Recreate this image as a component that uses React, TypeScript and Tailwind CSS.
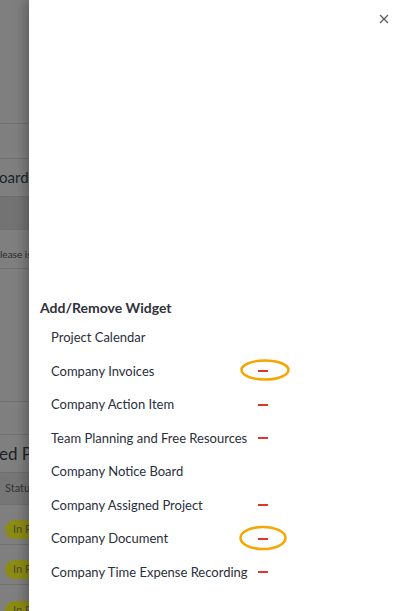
import React from "react";

const items: { label: string; dash: boolean; circle?: "a" | "b" }[] = [
  { label: "Project Calendar", dash: false },
  { label: "Company Invoices", dash: true, circle: "a" },
  { label: "Company Action Item", dash: true },
  { label: "Team Planning and Free Resources", dash: true },
  { label: "Company Notice Board", dash: false },
  { label: "Company Assigned Project", dash: true },
  { label: "Company Document", dash: true, circle: "b" },
  { label: "Company Time Expense Recording", dash: true },
];

function Badge() {
  return (
    <div className="ml-[5px] h-[19px] w-[40px] rounded-full bg-[#8c8c14] flex items-center pl-[8px] text-[11px] text-[#4a4a30] overflow-hidden">
      In P
    </div>
  );
}

export default function App() {
  return (
    <div
      className="relative w-[409px] h-[611px] overflow-hidden bg-[#7f7f7f]"
      style={{ fontFamily: "Lato, 'Noto Sans', sans-serif" }}
    >
      {/* dimmed page beneath */}
      <div className="flex flex-col w-[409px] text-[#1c1f2a] whitespace-nowrap">
        <div className="h-[124px] border-b border-[#6f6f6f]" />
        <div className="h-[35px] border-b border-[#6f6f6f]" />
        <div className="h-[38px] border-b border-[#6f6f6f] flex items-center text-[15px] -ml-[1px]">
          oard
        </div>
        <div className="h-[33px] border-b border-[#6f6f6f] bg-[#737373]" />
        <div className="h-[39px] border-b border-[#6f6f6f] flex items-center text-[10px] text-[#2a2a2a] pt-[10px]">
          lease is
        </div>
        <div className="h-[133px] border-b border-[#6f6f6f]" />
        <div className="h-[33px] border-b border-[#6f6f6f]" />
        <div className="h-[38px] border-b border-[#6f6f6f] flex items-center text-[17px] -ml-[1px]">
          ed Pr
        </div>
        <div className="h-[32px] border-b border-[#6f6f6f] bg-[#767676] flex items-center pl-[5px] text-[11px] text-[#333]">
          Statu
        </div>
        <div className="h-[40px] border-b border-[#6f6f6f] flex items-center pt-[10px]">
          <Badge />
        </div>
        <div className="h-[40px] border-b border-[#6f6f6f] flex items-center pt-[10px]">
          <Badge />
        </div>
        <div className="h-[40px] flex items-center pt-[10px]">
          <Badge />
        </div>
      </div>

      {/* drawer */}
      <div className="absolute top-0 bottom-0 left-[29px] right-0 bg-white shadow-[-4px_0_10px_rgba(0,0,0,0.25)] flex flex-col">
        <div className="h-[297px] flex justify-end">
          <button className="mt-[14px] mr-[20px] w-[10px] h-[10px] flex items-center justify-center">
            <svg width="10" height="10" viewBox="0 0 10 10">
              <path d="M1 1L9 9M9 1L1 9" stroke="#5a5a5a" strokeWidth="1.3" />
            </svg>
          </button>
        </div>
        <div className="pl-[11px] h-[20px] flex items-center text-[14px] font-bold text-[#2f323c]">
          Add/Remove Widget
        </div>
        <div className="flex flex-col mt-[4px]">
          {items.map((it) => (
            <div key={it.label} className="h-[33.5px] flex items-center pl-[22px] text-[13px] text-[#2a2f3b]">
              <span className="w-[207px] whitespace-nowrap">{it.label}</span>
              {it.dash && (
                <span className="relative w-[10px] h-[1.6px] bg-[#e0352b]">
                  {it.circle === "a" && (
                    <svg className="absolute left-[-19px] top-[-12px]" width="52" height="24" viewBox="0 0 52 24">
                      <ellipse cx="26" cy="12" rx="23.5" ry="9.5" fill="none" stroke="#f7a600" strokeWidth="2.5" />
                    </svg>
                  )}
                  {it.circle === "b" && (
                    <svg className="absolute left-[-20px] top-[-14px]" width="50" height="28" viewBox="0 0 50 28">
                      <ellipse cx="25" cy="14" rx="22.5" ry="11" fill="none" stroke="#f7a600" strokeWidth="2.5" />
                    </svg>
                  )}
                </span>
              )}
            </div>
          ))}
        </div>
      </div>
    </div>
  );
}
